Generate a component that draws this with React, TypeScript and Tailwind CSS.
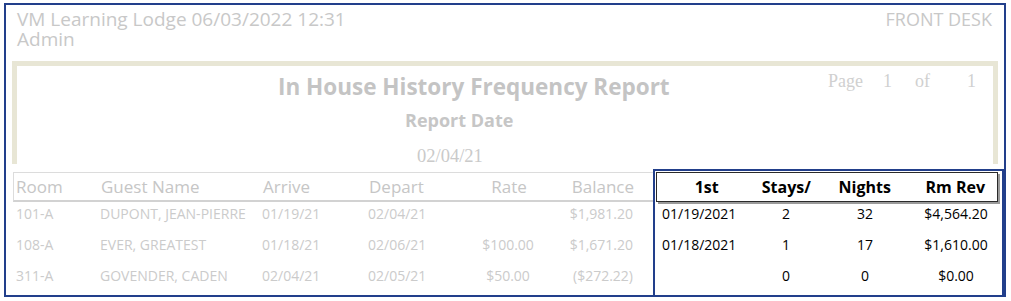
import React from 'react';

const rows = [
  { room: '101-A', name: 'DUPONT, JEAN-PIERRE', arrive: '01/19/21', depart: '02/04/21', rate: '', balance: '$1,981.20', first: '01/19/2021', stays: '2', nights: '32', rev: '$4,564.20' },
  { room: '108-A', name: 'EVER, GREATEST', arrive: '01/18/21', depart: '02/06/21', rate: '$100.00', balance: '$1,671.20', first: '01/18/2021', stays: '1', nights: '17', rev: '$1,610.00' },
  { room: '311-A', name: 'GOVENDER, CADEN', arrive: '02/04/21', depart: '02/05/21', rate: '$50.00', balance: '($272.22)', first: '', stays: '0', nights: '0', rev: '$0.00' },
];

export default function App() {
  return (
    <div className="w-[1011px] h-[301px] bg-white pt-[3px] pl-[4px] font-['Open_Sans',sans-serif]">
      <div className="w-[1002px] h-[294px] border-2 border-[#223f8b] flex flex-col">
        {/* page header */}
        <div className="h-[57px] flex justify-between pl-[11px] pr-[12px] pt-[4px] text-[19px] leading-[20px] text-[#c8c8c8]">
          <div>
            <div>VM Learning Lodge 06/03/2022 12:31</div>
            <div>Admin</div>
          </div>
          <div className="text-[18px]">FRONT DESK</div>
        </div>

        {/* report title frame */}
        <div className="ml-[6px] w-[986px] h-[103px] border-t-[5px] border-x-[5px] border-[#e8e6d5] flex">
          <div className="flex-1 flex flex-col items-start pt-[8px]">
            <div className="ml-[261px] text-[22.5px] leading-[26px] font-bold text-[#c4c4c4]">In House History Frequency Report</div>
            <div className="ml-[388px] mt-[9px] text-[18px] leading-[22px] font-bold text-[#c6c6c6]">Report Date</div>
            <div className="ml-[400px] mt-[14px] text-[18.5px] leading-[22px] text-[#cacaca] font-['Liberation_Serif',serif]">02/04/21</div>
          </div>
          <div className="w-[166px] pt-[4px] pl-[1px] flex text-[18px] leading-[22px] text-[#d0d0d0] font-['Liberation_Serif',serif]">
            <span>Page</span>
            <span className="ml-[20px]">1</span>
            <span className="ml-[23px]">of</span>
            <span className="ml-[37px]">1</span>
          </div>
        </div>

        {/* table */}
        <div className="flex-1 flex">
          <div className="ml-[7px] w-[640px] pt-[8px]">
            <div className="h-[30px] flex items-center border-t border-l border-[#dcdcdc] border-b-2 border-b-[#d2d2d2] text-[17px] text-[#c6c6c6]">
              <div className="w-[87px] pl-[2px]">Room</div>
              <div className="w-[162px]">Guest Name</div>
              <div className="w-[106px]">Arrive</div>
              <div className="w-[100px]">Depart</div>
              <div className="w-[80px] text-center">Rate</div>
              <div className="w-[85px] text-right">Balance</div>
            </div>
            {rows.map((r) => (
              <div key={r.room} className="h-[31px] pt-[3px] flex text-[14px] leading-[18px] text-[#cbcbcb]">
                <div className="w-[87px] pl-[3px]">{r.room}</div>
                <div className="w-[162px]">{r.name}</div>
                <div className="w-[106px]">{r.arrive}</div>
                <div className="w-[100px]">{r.depart}</div>
                <div className="w-[80px] text-center">{r.rate}</div>
                <div className="w-[85px] text-right">{r.balance}</div>
              </div>
            ))}
          </div>

          <div className="mt-[5px] w-[351px] border-t-2 border-x-2 border-[#223f8b] pt-[1px] pl-[1px]">
            <div className="w-[342px] h-[30px] flex items-center border border-[#2a2a2a] shadow-[2px_2px_0_#9a9a9a] text-[16px] font-bold text-black">
              <div className="w-[100px] text-center">1st</div>
              <div className="w-[60px] text-center">Stays/</div>
              <div className="w-[98px] text-center">Nights</div>
              <div className="w-[84px] text-center">Rm Rev</div>
            </div>
            {rows.map((r) => (
              <div key={r.room} className="h-[31px] pt-[3px] flex text-[14px] leading-[18px] text-black">
                <div className="w-[100px] pl-[6px]">{r.first}</div>
                <div className="w-[60px] text-center">{r.stays}</div>
                <div className="w-[98px] text-center">{r.nights}</div>
                <div className="w-[84px] text-center">{r.rev}</div>
              </div>
            ))}
          </div>
        </div>
      </div>
    </div>
  );
}
